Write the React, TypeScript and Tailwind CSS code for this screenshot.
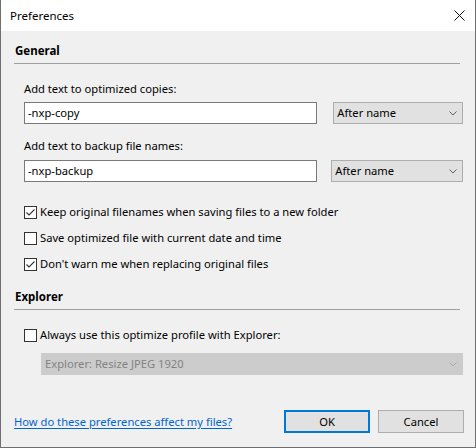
import React from 'react';

interface CheckProps {
  checked?: boolean;
  label: string;
}

function Check({ checked, label }: CheckProps) {
  return (
    <label className="flex h-4 items-center">
      <span className="flex h-[13px] w-[13px] items-center justify-center border border-[#333333] bg-white">
        {checked && (
          <svg width="11" height="11" viewBox="0 0 11 11" fill="none">
            <path d="M1.5 5.5 L4 8 L9.5 2.5" stroke="#333333" strokeWidth="1.1" />
          </svg>
        )}
      </span>
      <span className="ml-[3px] text-black">{label}</span>
    </label>
  );
}

function Chevron({ color = '#606060' }: { color?: string }) {
  return (
    <svg width="8" height="5" viewBox="0 0 8 5" fill="none">
      <path d="M0.5 0.5 L4 4 L7.5 0.5" stroke={color} strokeWidth="1" />
    </svg>
  );
}

function Select({ value, className }: { value: string; className: string }) {
  return (
    <div
      className={`flex h-[22px] items-center justify-between border border-[#adadad] bg-[#e1e1e1] pl-[3px] pr-[5px] ${className}`}
    >
      <span>{value}</span>
      <Chevron />
    </div>
  );
}

function SectionHeader({ title }: { title: string }) {
  return (
    <div className="ml-[13px] mr-[15px]">
      <div className="ml-px h-4 text-[11.5px] font-bold leading-4">{title}</div>
      <div className="mt-1 h-px bg-[#a0a0a0]" />
    </div>
  );
}

export default function App() {
  return (
    <div className="flex h-[448px] w-[476px] flex-col border-x border-b border-[#6f6f6f] bg-[#f0f0f0] font-['Noto_Sans'] text-[11.2px] leading-4 text-black">
      {/* Title bar */}
      <div className="flex h-[31px] items-center justify-between bg-white pl-[9px] pr-[10px]">
        <span className="text-[11.5px]">Preferences</span>
        <svg width="11" height="11" viewBox="0 0 11 11" fill="none">
          <path d="M0.5 0.5 L10.5 10.5 M10.5 0.5 L0.5 10.5" stroke="#111111" strokeWidth="1" />
        </svg>
      </div>

      {/* Body */}
      <div className="flex flex-1 flex-col pt-3">
        <SectionHeader title="General" />

        <div className="ml-[23px] mr-[12px] mt-[17px]">
          <div>Add text to optimized copies:</div>
          <div className="mt-[5px] flex items-center">
            <div className="flex h-[22px] w-[294px] items-center border border-[#7a7a7a] bg-white pl-[3px]">
              -nxp-copy
            </div>
            <Select value="After name" className="ml-[16px] w-[130px]" />
          </div>

          <div className="mt-[14px]">Add text to backup file names:</div>
          <div className="mt-[6px] flex items-center">
            <div className="flex h-[22px] w-[294px] items-center border border-[#7a7a7a] bg-white pl-[3px]">
              -nxp-backup
            </div>
            <Select value="After name" className="ml-[14px] w-[132px]" />
          </div>

          <div className="mt-[22px] flex flex-col gap-[10px]">
            <Check checked label="Keep original filenames when saving files to a new folder" />
            <Check label="Save optimized file with current date and time" />
            <Check checked label="Don't warn me when replacing original files" />
          </div>
        </div>

        <div className="mt-[17px]">
          <SectionHeader title="Explorer" />
        </div>

        <div className="ml-[23px] mr-[12px] mt-[17px]">
          <Check label="Always use this optimize profile with Explorer:" />
          <div className="ml-[17px] mt-[10px] flex h-[22px] items-center justify-between border border-[#cccccc] bg-[#cccccc] pl-[3px] pr-[5px] text-[#838383]">
            <span>Explorer: Resize JPEG 1920</span>
            <Chevron color="#a8a8a8" />
          </div>
        </div>

        <div className="ml-[13px] mr-[11px] mt-[35px] flex items-center justify-between">
          <a href="#" className="text-[#0066cc] underline underline-offset-2">
            How do these preferences affect my files?
          </a>
          <div className="flex gap-2">
            <button className="flex h-[23px] w-[86px] items-center justify-center border-2 border-[#0078d7] bg-[#e1e1e1]">
              OK
            </button>
            <button className="flex h-[23px] w-[86px] items-center justify-center border border-[#adadad] bg-[#e1e1e1]">
              Cancel
            </button>
          </div>
        </div>
      </div>
    </div>
  );
}
